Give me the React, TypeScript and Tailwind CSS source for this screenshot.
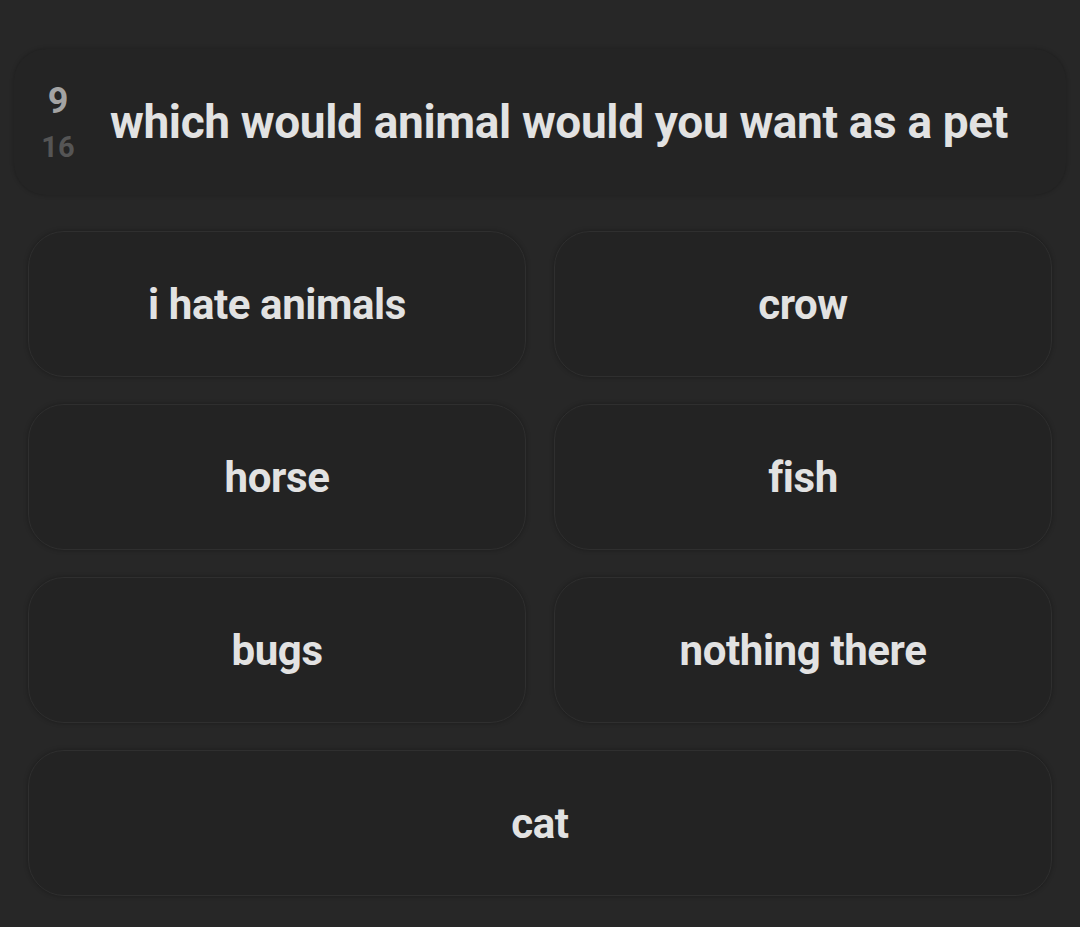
const options = ['i hate animals', 'crow', 'horse', 'fish', 'bugs', 'nothing there'];

export default function App() {
  return (
    <div
      className="min-h-[927px] w-full bg-[#272727] px-[14px] pt-[49px] pb-[30px]"
      style={{ fontFamily: 'Roboto, "Liberation Sans", sans-serif' }}
    >
      <div className="flex h-[146px] items-center rounded-[32px] bg-[#242424] pl-[24px] pr-[20px] shadow-[0_0_4px_rgba(0,0,0,0.25)]">
        <div className="flex w-[40px] flex-col items-center font-bold leading-none">
          <span className="text-[36px] text-[#a3a3a3]">9</span>
          <span className="mt-[14px] text-[29px] text-[#555555]">16</span>
        </div>
        <h1 className="ml-[32px] text-[46px] font-bold tracking-[-0.35px] text-[#e2e2e2]">
          which would animal would you want as a pet
        </h1>
      </div>

      <div className="mt-[36px] grid grid-cols-2 gap-x-[28px] gap-y-[27px] px-[14px]">
        {options.map((o) => (
          <button
            key={o}
            className="flex h-[146px] items-center justify-center rounded-[36px] border border-[#2f2f2f] bg-[#232323] text-[42px] font-bold tracking-[-0.4px] text-[#e2e2e2] shadow-[0_0_5px_rgba(0,0,0,0.3)]"
          >
            {o}
          </button>
        ))}
        <button className="col-span-2 flex h-[146px] items-center justify-center rounded-[36px] border border-[#2f2f2f] bg-[#232323] text-[42px] font-bold tracking-[-0.4px] text-[#e2e2e2] shadow-[0_0_5px_rgba(0,0,0,0.3)]">
          cat
        </button>
      </div>
    </div>
  );
}
